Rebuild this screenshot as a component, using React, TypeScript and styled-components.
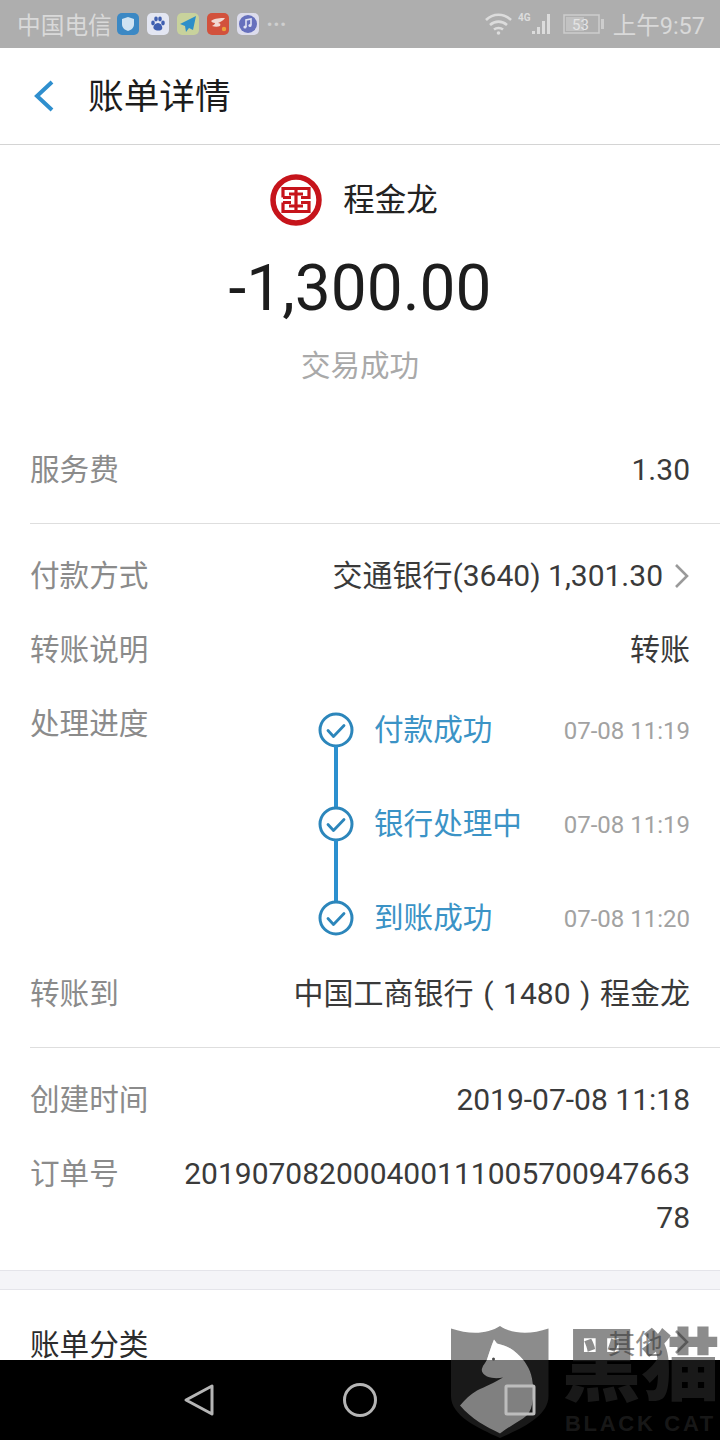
import styled, { createGlobalStyle } from "styled-components";

const GlobalStyle = createGlobalStyle`
  html, body {
    margin: 0;
    padding: 0;
    background: #fff;
  }
  * {
    box-sizing: border-box;
  }
`;

const Screen = styled.div`
  position: relative;
  width: 720px;
  height: 1440px;
  overflow: hidden;
  display: flex;
  flex-direction: column;
  background: #fff;
  font-family: Roboto, "Noto Sans CJK SC", "Noto Sans", sans-serif;
  color: #333;
`;

const StatusBar = styled.div`
  height: 48px;
  flex: none;
  background: #aeaeae;
  display: flex;
  align-items: center;
  padding: 0 15px 0 17px;
  color: #d9d9d9;
`;

const Carrier = styled.span`
  font-size: 23.7px;
  margin-right: 5px;
`;

const AppIcons = styled.div`
  display: flex;
  gap: 8px;
  align-items: center;
`;

const AppIcon = styled.div<{ $bg: string }>`
  width: 22px;
  height: 22px;
  border-radius: 5px;
  background: ${(p) => p.$bg};
  display: flex;
  align-items: center;
  justify-content: center;
`;

const More = styled.span`
  font-size: 17px;
  letter-spacing: 1px;
  margin-left: 8px;
  line-height: 1;
  color: #cfcfcf;
`;

const StatusRight = styled.div`
  margin-left: auto;
  display: flex;
  align-items: center;
  gap: 6px;
`;

const Clock = styled.span`
  font-size: 23.5px;
  margin-left: 2px;
`;

const Header = styled.div`
  height: 97px;
  flex: none;
  display: flex;
  align-items: center;
  padding-left: 32px;
  border-bottom: 1px solid #d4d4d4;
`;

const BackIcon = styled.svg`
  width: 24px;
  height: 34px;
  margin-right: 32px;
`;

const Title = styled.h1`
  margin: 0 0 6px;
  font-size: 35.7px;
  font-weight: 400;
  color: #1c1c1c;
`;

const Body = styled.div`
  flex: 1;
  min-height: 0;
  overflow: hidden;
`;

const Summary = styled.div`
  height: 252px;
  padding-top: 28px;
  display: flex;
  flex-direction: column;
  align-items: center;
`;

const Payee = styled.div`
  display: flex;
  align-items: center;
  gap: 21px;
  height: 54px;
  padding-right: 12px;
  color: #222;
  font-size: 31.5px;
`;

const PayeeName = styled.span`
  margin-bottom: 6px;
`;

const Amount = styled.div`
  font-size: 64px;
  line-height: 76px;
  margin-top: 24px;
  color: #1d1d1d;
`;

const Status = styled.div`
  font-size: 29.5px;
  line-height: 40px;
  margin-top: 19px;
  color: #a9a9a9;
`;

const Group = styled.section<{ $divided?: boolean; $pad: string }>`
  margin-left: 30px;
  padding: ${(p) => p.$pad};
  border-bottom: ${(p) => (p.$divided ? "1px solid #dedede" : "none")};
`;

const Row = styled.div<{ $h: number; $top?: boolean }>`
  min-height: ${(p) => p.$h}px;
  display: flex;
  justify-content: space-between;
  align-items: ${(p) => (p.$top ? "flex-start" : "center")};
  padding-right: 30px;
`;

const Label = styled.div<{ $offset?: boolean }>`
  flex: none;
  font-size: 29.6px;
  line-height: 44px;
  color: #8b8b8b;
  margin-top: ${(p) => (p.$offset ? "15px" : "0")};
`;

const Value = styled.div`
  font-size: 30px;
  line-height: 44px;
  color: #3a3a3a;
  text-align: right;
`;

const PayValue = styled(Value)`
  display: flex;
  align-items: center;
`;

const Bracket = styled.span`
  display: inline-block;
  width: 29.5px;
  text-align: center;
`;

const Chevron = styled.svg`
  width: 16px;
  height: 28px;
  margin-left: 11px;
`;

const OrderValue = styled(Value)`
  width: 510px;
  margin-top: 15px;
  word-break: break-all;
`;

const Steps = styled.div`
  width: 372px;
  margin: -4px 0 -8px;
  display: flex;
  flex-direction: column;
`;

const Step = styled.div`
  position: relative;
  height: 94px;
  display: flex;
  align-items: center;
`;

const Connector = styled.div`
  position: absolute;
  left: 16px;
  top: 63px;
  width: 4px;
  height: 62px;
  background: #2b90cf;
`;

const StepIcon = styled.svg`
  width: 36px;
  height: 36px;
  flex: none;
  margin-right: 20px;
`;

const StepName = styled.div`
  font-size: 29.6px;
  color: #3b93c6;
  line-height: 44px;
`;

const StepTime = styled.div`
  margin: 2px 0 0 auto;
  font-size: 24px;
  color: #a2a2a2;
`;

const Band = styled.div`
  height: 20px;
  background: #f4f4f8;
  border-top: 1px solid #e4e4ea;
  border-bottom: 1px solid #e4e4ea;
`;

const CategoryRow = styled.div`
  height: 104px;
  display: flex;
  justify-content: space-between;
  align-items: center;
  padding: 0 30px;
`;

const CategoryLabel = styled.div`
  font-size: 29.6px;
  color: #2c2c2c;
`;

const CategoryValue = styled.div`
  display: flex;
  align-items: center;
  font-size: 27.5px;
  color: #8f8f8f;
`;

const NavBar = styled.div`
  height: 80px;
  flex: none;
  background: #000;
  display: flex;
  align-items: center;
  justify-content: center;
  gap: 116px;
`;

const NavIcon = styled.svg`
  position: relative;
  z-index: 2;
  width: 44px;
  height: 44px;
`;

const Watermark = styled.div`
  position: absolute;
  z-index: 1;
  left: 450px;
  top: 1326px;
  width: 270px;
  height: 114px;
  display: flex;
  gap: 12px;
  pointer-events: none;
`;

const WatermarkShield = styled.svg`
  flex: none;
  width: 100px;
  height: 114px;
`;

const WatermarkWords = styled.div`
  display: flex;
  flex-direction: column;
  align-items: flex-start;
  color: rgba(45, 45, 45, 0.55);
`;

const WatermarkTitle = styled.div`
  font-size: 79px;
  font-weight: 900;
  line-height: 84px;
  white-space: nowrap;
`;

const WatermarkSub = styled.div`
  margin: 3px 0 0 3px;
  font-family: "Liberation Sans", sans-serif;
  font-size: 22px;
  font-weight: 700;
  letter-spacing: 2.7px;
  line-height: 22px;
  white-space: nowrap;
`;

function StepCheck() {
  return (
    <StepIcon viewBox="0 0 36 36" fill="none">
      <circle cx="18" cy="18" r="16" stroke="#2c86bb" strokeWidth="3" />
      <path d="M10 18.5l5.5 6 10.5-11" stroke="#2c86bb" strokeWidth="2.8" strokeLinecap="round" strokeLinejoin="round" />
    </StepIcon>
  );
}

function BankLogo() {
  return (
    <svg width="52" height="52" viewBox="0 0 52 52" fill="none">
      <circle cx="26" cy="26" r="23" stroke="#c6141b" strokeWidth="5.5" />
      <path
        d="M13 23.5V14.5H39V23.5H31M13 23.5H21M13 28.5V37.5H39V28.5H31M13 28.5H21M26 14.5V20M26 32V37.5M19 20H33M19 32H33M26 20V32"
        stroke="#c6141b"
        strokeWidth="3.2"
      />
    </svg>
  );
}

function ChevronRight({ color }: { color: string }) {
  return (
    <Chevron viewBox="0 0 16 28" fill="none">
      <path d="M2 3l11 11L2 25" stroke={color} strokeWidth="2.6" />
    </Chevron>
  );
}

const STEPS = [
  { name: "付款成功", time: "07-08 11:19" },
  { name: "银行处理中", time: "07-08 11:19" },
  { name: "到账成功", time: "07-08 11:20" },
];

export default function App() {
  return (
    <Screen>
      <GlobalStyle />
      <StatusBar>
        <Carrier>中国电信</Carrier>
        <AppIcons>
          <AppIcon $bg="#3b88c4">
            <svg width="14" height="16" viewBox="0 0 14 16">
              <path d="M7 1l6 2v5c0 4-3 6-6 7-3-1-6-3-6-7V3z" fill="#cfe3f2" />
            </svg>
          </AppIcon>
          <AppIcon $bg="#e3e6f2">
            <svg width="18" height="18" viewBox="0 0 18 18" fill="#3f5fb0">
              <ellipse cx="4" cy="8" rx="1.8" ry="2.4" />
              <ellipse cx="7" cy="4" rx="1.8" ry="2.4" />
              <ellipse cx="11" cy="4" rx="1.8" ry="2.4" />
              <ellipse cx="14" cy="8" rx="1.8" ry="2.4" />
              <path d="M9 8c3 0 5 4 4 6s-6 2-8 0 1-6 4-6z" />
            </svg>
          </AppIcon>
          <AppIcon $bg="#c8d29c">
            <svg width="20" height="20" viewBox="0 0 20 20">
              <path d="M18 2L2 10l5 2 1 6 3-4 4 2z" fill="#2c8fc9" />
            </svg>
          </AppIcon>
          <AppIcon $bg="#d2513c">
            <svg width="18" height="16" viewBox="0 0 18 16" fill="none">
              <path d="M2 5c4-3 9-3 14-3-2 3-5 4-7 5 2 0 3 1 2 3-2 1-5 1-8 0 2-1 3-2 3-3-2 0-3-1-4-2z" fill="#f1d9d3" />
              <circle cx="15" cy="13" r="2.2" fill="#eda13a" />
            </svg>
          </AppIcon>
          <AppIcon $bg="#dcdcec">
            <svg width="20" height="20" viewBox="0 0 20 20">
              <circle cx="10" cy="10" r="9" fill="#6670bd" />
              <path d="M8 13V6l5-1v6" stroke="#dfe2f3" strokeWidth="1.6" fill="none" />
              <circle cx="7" cy="13" r="1.6" fill="#dfe2f3" />
              <circle cx="12" cy="11.5" r="1.6" fill="#dfe2f3" />
            </svg>
          </AppIcon>
        </AppIcons>
        <More>•••</More>
        <StatusRight>
          <svg width="27" height="26" viewBox="0 0 27 26" fill="none" stroke="#dcdcdc" strokeWidth="2.6">
            <path d="M1 9c7-7 18-7 25 0M5 14c5-4.5 12-4.5 17 0M9 18.5c2.5-2 6.5-2 9 0" />
            <circle cx="13.5" cy="22" r="1.8" fill="#dcdcdc" stroke="none" />
          </svg>
          <svg width="39" height="24" viewBox="0 0 39 24" fill="#dcdcdc">
            <text x="0" y="9" fontSize="10" fontWeight="700" fontFamily="Roboto, sans-serif">
              4G
            </text>
            <rect x="14" y="19" width="3" height="3" />
            <rect x="19" y="15" width="3" height="7" />
            <rect x="24" y="9" width="3" height="13" />
            <rect x="29" y="2" width="3" height="20" />
          </svg>
          <svg width="42" height="22" viewBox="0 0 42 22" fill="none">
            <rect x="1" y="2" width="35" height="18" stroke="#cdcdcd" strokeWidth="1.5" />
            <rect x="3" y="4" width="18" height="14" fill="#c2c2c2" />
            <rect x="38" y="6" width="3" height="10" fill="#cdcdcd" />
            <text x="9" y="17" fontSize="15" fill="#e4e4e4" fontFamily="Roboto, sans-serif">
              53
            </text>
          </svg>
          <Clock>上午9:57</Clock>
        </StatusRight>
      </StatusBar>

      <Header>
        <BackIcon viewBox="0 0 24 34" fill="none">
          <path d="M20 3L5 17l15 14" stroke="#2f8fce" strokeWidth="4" />
        </BackIcon>
        <Title>账单详情</Title>
      </Header>

      <Body>
        <Summary>
          <Payee>
            <BankLogo />
            <PayeeName>程金龙</PayeeName>
          </Payee>
          <Amount>-1,300.00</Amount>
          <Status>交易成功</Status>
        </Summary>

        <Group $divided $pad="25px 0 5px">
          <Row $h={96}>
            <Label>服务费</Label>
            <Value>1.30</Value>
          </Row>
        </Group>

        <Group $divided $pad="15px 0 16px">
          <Row $h={74}>
            <Label>付款方式</Label>
            <PayValue>
              交通银行(3640) 1,301.30
              <ChevronRight color="#9a9a9a" />
            </PayValue>
          </Row>
          <Row $h={74}>
            <Label>转账说明</Label>
            <Value>转账</Value>
          </Row>
          <Row $h={270} $top>
            <Label $offset>处理进度</Label>
            <Steps>
              {STEPS.map((s, i) => (
                <Step key={s.name}>
                  {i < STEPS.length - 1 && <Connector />}
                  <StepCheck />
                  <StepName>{s.name}</StepName>
                  <StepTime>{s.time}</StepTime>
                </Step>
              ))}
            </Steps>
          </Row>
          <Row $h={74}>
            <Label>转账到</Label>
            <Value>
              中国工商银行<Bracket>(</Bracket>1480<Bracket>)</Bracket>程金龙
            </Value>
          </Row>
        </Group>

        <Group $pad="15px 0 30px">
          <Row $h={74}>
            <Label>创建时间</Label>
            <Value>2019-07-08 11:18</Value>
          </Row>
          <Row $h={88} $top>
            <Label $offset>订单号</Label>
            <OrderValue>20190708200040011100570094766378</OrderValue>
          </Row>
        </Group>

        <Band />
        <CategoryRow>
          <CategoryLabel>账单分类</CategoryLabel>
          <CategoryValue>
            其他
            <ChevronRight color="#8f8f8f" />
          </CategoryValue>
        </CategoryRow>
      </Body>

      <NavBar>
        <NavIcon viewBox="0 0 44 44" fill="none">
          <path d="M8 22L34 8v28z" stroke="#b5b5b5" strokeWidth="3" strokeLinejoin="round" />
        </NavIcon>
        <NavIcon viewBox="0 0 44 44" fill="none">
          <circle cx="22" cy="22" r="15.5" stroke="#b5b5b5" strokeWidth="3" />
        </NavIcon>
        <NavIcon viewBox="0 0 44 44" fill="none">
          <rect x="8" y="8" width="28" height="28" rx="1" stroke="#bdbdbd" strokeWidth="3" />
        </NavIcon>
      </NavBar>

      <Watermark>
        <WatermarkShield viewBox="0 0 100 114">
          <path
            fillRule="evenodd"
            d="M1 2.5C20 9 38 8 50 0c12 8 30 9 48.5 2.5V70c0 20-26 32-48.5 42C28 102 1 90 1 70zM44 13.5l3 4c8 2 15 5 20 10 8 7 13 15 15 25 2 10 2 20-1 30-2 5-5 8-8 10-8 5-15 9-23 15-14-7-28-14-40-28 5-6 10-11 17-15 8-4 16-7 26-13-5 1-11 1-16-1-4-2-6-5-5-8 1-4 4-6 5-9 2-6 4-13 7-20z"
            fill="rgba(45,45,45,0.55)"
          />
          <path
            d="M44 13.5l3 4c8 2 15 5 20 10 8 7 13 15 15 25 2 10 2 20-1 30-2 5-5 8-8 10-8 5-15 9-23 15-14-7-28-14-40-28 5-6 10-11 17-15 8-4 16-7 26-13-5 1-11 1-16-1-4-2-6-5-5-8 1-4 4-6 5-9 2-6 4-13 7-20z"
            fill="rgba(255,255,255,0.5)"
          />
          <circle cx="43.5" cy="33" r="1.5" fill="rgba(30,30,30,0.8)" />
        </WatermarkShield>
        <WatermarkWords>
          <WatermarkTitle>黑猫</WatermarkTitle>
          <WatermarkSub>BLACK CAT</WatermarkSub>
        </WatermarkWords>
      </Watermark>
    </Screen>
  );
}
